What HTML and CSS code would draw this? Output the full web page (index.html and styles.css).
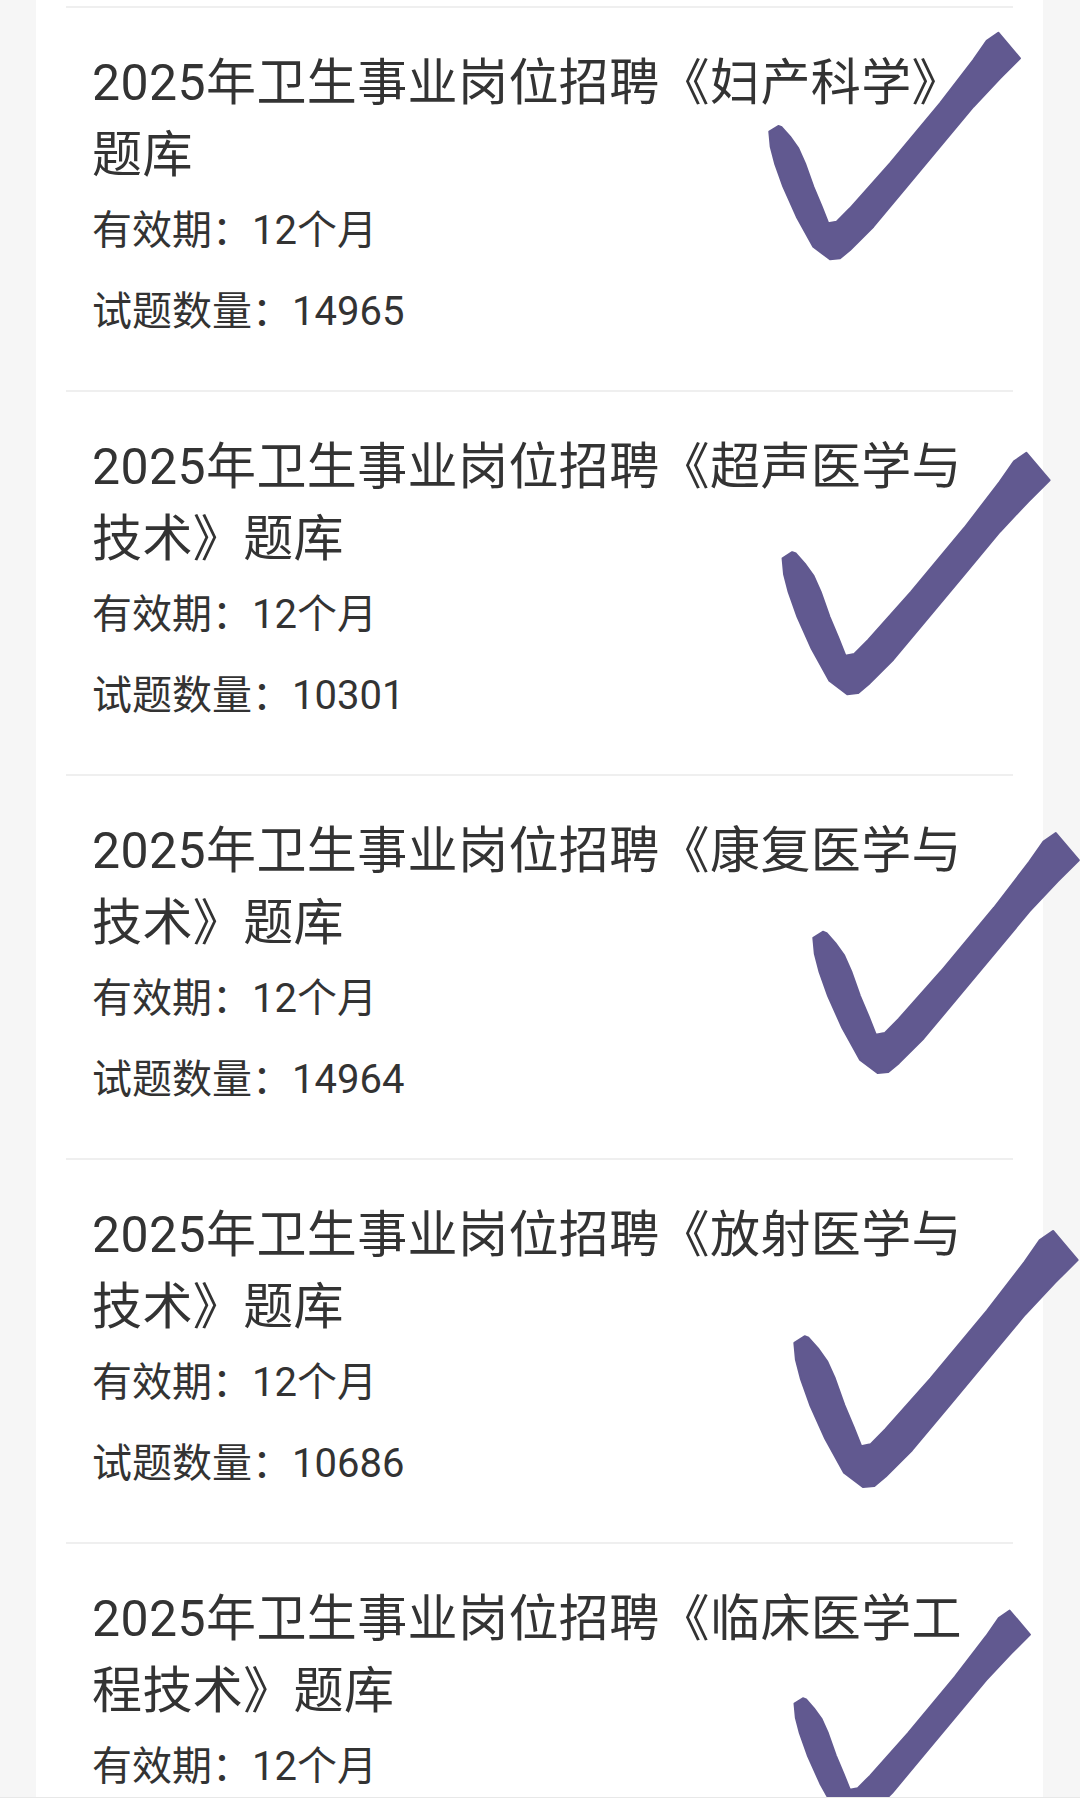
FILE: index.html
```html
<!DOCTYPE html>
<html lang="zh-CN">
<head>
<meta charset="utf-8">
<title>题库列表</title>
<link rel="stylesheet" href="styles.css">
</head>
<body>
<svg class="defs" width="0" height="0" aria-hidden="true">
  <defs>
    <path id="tick" d="M10.3 96 L13.7 97.3 L22 106.7 L30.3 118.3 L37 133.3 L45.3 156.7 L53.7 176.7 L60.3 193.3 L68.7 191.7 L82 178.3 L122 133.3 L172 73.3 L205.3 30 L218.7 10.7 L230.3 2.7 L252 28.3 L232 48.3 L205.3 76.7 L172 116.7 L138.7 156.7 L105.3 196.7 L82 220 L72 228.3 L62 229.3 L45.3 216.7 L28.7 186.7 L15.3 156.7 L7 133.3 L2.7 116.7 L1.3 101.7 Z"/>
  </defs>
</svg>
<main class="card">
  <section class="item">
    <h2 class="title">2025年卫生事业岗位招聘《妇产科学》题库</h2>
    <p class="info">有效期：12个月</p>
    <p class="info">试题数量：14965</p>
    <svg class="check check-1" viewBox="0 0 256 232"><use href="#tick"/></svg>
  </section>
  <section class="item">
    <h2 class="title">2025年卫生事业岗位招聘《超声医学与技术》题库</h2>
    <p class="info">有效期：12个月</p>
    <p class="info">试题数量：10301</p>
    <svg class="check check-2" viewBox="0 0 256 232"><use href="#tick"/></svg>
  </section>
  <section class="item">
    <h2 class="title">2025年卫生事业岗位招聘《康复医学与技术》题库</h2>
    <p class="info">有效期：12个月</p>
    <p class="info">试题数量：14964</p>
    <svg class="check check-3" viewBox="0 0 256 232"><use href="#tick"/></svg>
  </section>
  <section class="item">
    <h2 class="title">2025年卫生事业岗位招聘《放射医学与技术》题库</h2>
    <p class="info">有效期：12个月</p>
    <p class="info">试题数量：10686</p>
    <svg class="check check-4" viewBox="0 0 256 232"><use href="#tick"/></svg>
  </section>
  <section class="item item-last">
    <h2 class="title">2025年卫生事业岗位招聘《临床医学工程技术》题库</h2>
    <p class="info">有效期：12个月</p>
    <svg class="check check-5" viewBox="0 0 256 232"><use href="#tick"/></svg>
  </section>
</main>
<footer class="bottom-bar"></footer>
</body>
</html>
```

FILE: styles.css
```css
html, body {
  margin: 0;
  padding: 0;
}
body {
  background: #f6f6f6;
  font-family: Roboto, "Noto Sans CJK SC", sans-serif;
  color: #333333;
  overflow: hidden;
}
.defs {
  position: absolute;
  width: 0;
  height: 0;
}
.card {
  margin: 0 37px 0 36px;
  background: #ffffff;
  padding: 6px 30px 0;
}
.item {
  position: relative;
  border-top: 2px solid #efefef;
  padding: 39px 26px 50px;
}
.title {
  margin: 0;
  font-size: 50px;
  line-height: 72px;
  font-weight: 400;
  letter-spacing: 0.4px;
}
.info {
  margin: 12px 0 0;
  font-size: 40px;
  line-height: 56px;
}
.info + .info {
  margin-top: 25px;
}
.check {
  position: absolute;
  fill: #615990;
  stroke: #615990;
  stroke-width: 2;
  stroke-linejoin: round;
  overflow: visible;
  z-index: 2;
}
.check-1 { left: 702px; top: 22px; width: 256px; height: 232px; }
.check-2 { left: 715px; top: 58px; width: 273px; height: 247px; }
.check-3 { left: 746px; top: 54px; width: 271px; height: 246px; }
.check-4 { left: 727px; top: 68px; width: 289px; height: 262px; }
.check-5 { left: 727px; top: 64px; width: 241px; height: 218px; }
.bottom-bar {
  position: fixed;
  left: 0;
  right: 0;
  bottom: 0;
  height: 9px;
  background: #ffffff;
  border-top: 1px solid #e8e8e8;
  z-index: 5;
}
```
